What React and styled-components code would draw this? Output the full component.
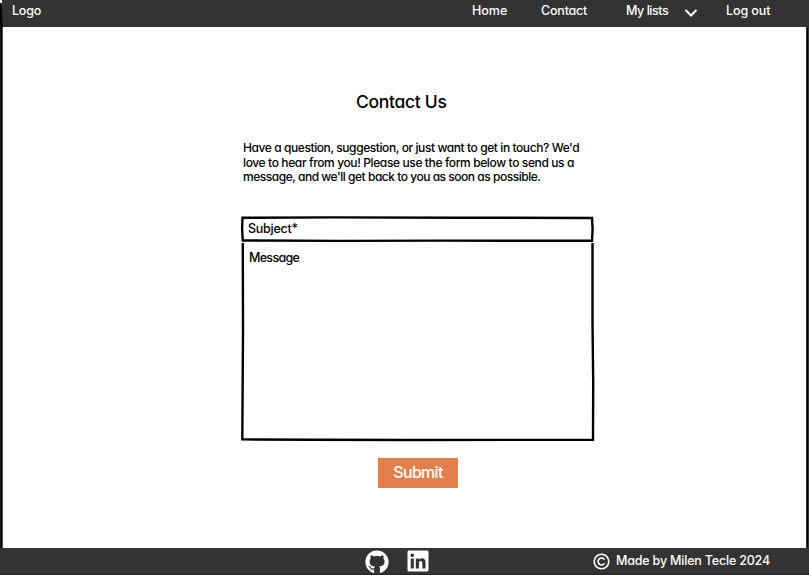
import React from "react";
import styled, { createGlobalStyle } from "styled-components";
import { FaGithub, FaLinkedin } from "react-icons/fa";

const GlobalStyle = createGlobalStyle`
  * { box-sizing: border-box; }
  body { margin: 0; background: #fff; }
`;

const Page = styled.div`
  position: relative;
  width: 809px;
  height: 575px;
  display: flex;
  flex-direction: column;
  overflow: hidden;
  background: #fff;
  color: #000;
  font-family: Inter, "Liberation Sans", sans-serif;
  font-feature-settings: "cv11";
  font-weight: 450;
  font-size: 12.5px;
  line-height: 15px;
`;

const SideLines = styled.svg`
  position: absolute;
  inset: 0;
  pointer-events: none;
`;

const Header = styled.header`
  height: 27px;
  flex: none;
  display: flex;
  justify-content: space-between;
  margin-left: 2px;
  padding: 3px 38px 0 10px;
  background: #333;
  color: #fff;
`;

const Label = styled.span`
  white-space: nowrap;
  letter-spacing: ${(p) => p.$track || 0}px;
`;

const Nav = styled.nav`
  display: grid;
  grid-template-columns: 69px 85px 58px 42px 45px;
`;

const Chevron = styled.svg`
  margin-top: 5px;
`;

const Main = styled.main`
  flex: 1;
  display: flex;
  flex-direction: column;
  padding-left: 241px;
`;

const Title = styled.h1`
  margin: 64px 0 0 115px;
  font-size: 17.5px;
  line-height: 22px;
  font-weight: 450;
  letter-spacing: -0.3px;
`;

const Intro = styled.p`
  margin: 28px 0 0 2px;
  display: flex;
  flex-direction: column;
  font-size: 12px;
  line-height: 14.7px;
`;

const Form = styled.form`
  margin-top: 32px;
  width: 353px;
  display: flex;
  flex-direction: column;
`;

const Field = styled.div`
  position: relative;
  height: ${(p) => p.$height}px;
  padding: ${(p) => p.$pad};
`;

const Outline = styled.svg`
  position: absolute;
  inset: 0;
  overflow: visible;
`;

const Submit = styled.button`
  width: 80px;
  height: 30px;
  margin: 17px 0 0 137px;
  padding: 0 0 1px;
  border: 0;
  background: #e37f4d;
  color: #fff;
  font: inherit;
  font-feature-settings: inherit;
  font-size: 16px;
  letter-spacing: -0.7px;
`;

const Footer = styled.footer`
  height: 27px;
  flex: none;
  display: flex;
  align-items: flex-start;
  padding-left: 365px;
  background: #333;
  border-bottom: 1px solid #242424;
  color: #fff;
`;

const Social = styled.div`
  display: flex;
  align-items: flex-start;
  gap: 17px;
  padding-top: 2px;

  svg + svg {
    margin-top: -1px;
  }
`;

const Credit = styled.div`
  display: flex;
  align-items: flex-start;
  gap: 6px;
  margin: 5px 0 0 163px;
`;

export default function App() {
  return (
    <Page>
      <GlobalStyle />
      <SideLines width="809" height="575">
        <path d="M.5 3L1.4 27V548" fill="none" stroke="#000" strokeWidth="2.6" />
        <path d="M807.5 27V548" fill="none" stroke="#000" strokeWidth="2.6" />
      </SideLines>
      <Header>
        <Label $track={-0.2}>Logo</Label>
        <Nav>
          <Label>Home</Label>
          <Label $track={-0.2}>Contact</Label>
          <Label $track={-0.45}>My lists</Label>
          <Chevron width="14" height="10" viewBox="0 0 14 10">
            <path d="M1.5 2L7 7.5L12.5 2" fill="none" stroke="#fff" strokeWidth="2" />
          </Chevron>
          <Label $track={-0.1}>Log out</Label>
        </Nav>
      </Header>
      <Main>
        <Title>Contact Us</Title>
        <Intro>
          <Label $track={-0.415}>Have a question, suggestion, or just want to get in touch? We'd</Label>
          <Label $track={-0.38}>love to hear from you! Please use the form below to send us a</Label>
          <Label $track={-0.475}>message, and we'll get back to you as soon as possible.</Label>
        </Intro>
        <Form onSubmit={(e) => e.preventDefault()}>
          <Field $height={25} $pad="4px 7px">
            <Outline width="353" height="25">
              <path d="M1.5 .8L90 .4L220 .7L351 1L351.6 12L351 23.8L200 23.6L100 23.9L1.8 23.5L1.1 12Z" fill="none" stroke="#000" strokeWidth="2.4" />
            </Outline>
            <Label $track={-0.25}>Subject*</Label>
          </Field>
          <Field $height={199} $pad="8px 8px">
            <Outline width="353" height="199">
              <path d="M1.8 1L2 90L1.3 197.4L70 197.7L170 198L352 197.7L352.2 140L351.5 80L351.5 1" fill="none" stroke="#000" strokeWidth="2.4" />
            </Outline>
            <Label $track={-0.7}>Message</Label>
          </Field>
          <Submit type="submit">Submit</Submit>
        </Form>
      </Main>
      <Footer>
        <Social>
          <FaGithub size={24} />
          <FaLinkedin size={24} />
        </Social>
        <Credit>
          <svg width="17" height="17" viewBox="0 0 17 17" fill="none" stroke="#fff" strokeWidth="1.6">
            <circle cx="8.5" cy="8.5" r="7.3" />
            <path d="M11.5 6.6A3.5 3.5 0 1 0 11.5 10.4" />
          </svg>
          <Label $track={-0.19}>Made by Milen Tecle 2024</Label>
        </Credit>
      </Footer>
    </Page>
  );
}
